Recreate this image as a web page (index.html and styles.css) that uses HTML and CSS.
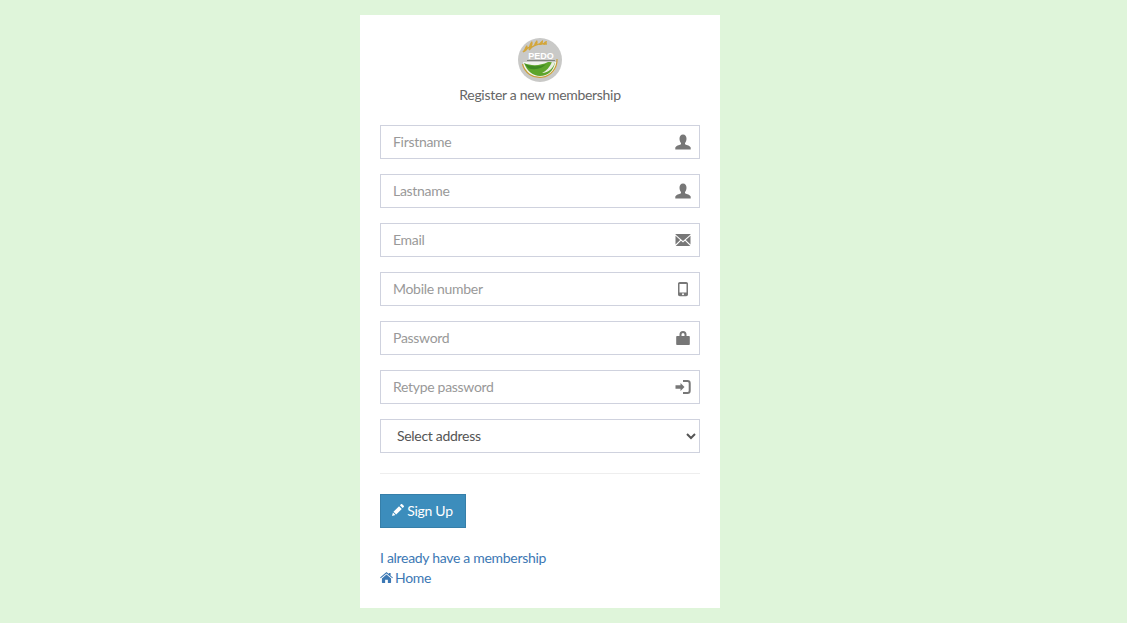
FILE: index.html
```html
<!DOCTYPE html>
<html lang="en">
<head>
    <meta charset="UTF-8">
    <meta name="viewport" content="width=device-width, initial-scale=1.0">
    <title>Registration</title>
    <link rel="stylesheet" href="styles.css">
</head>
<body>
    <div class="register-box">
        <div class="logo">
            <svg viewBox="0 0 44 44" width="44" height="44">
                <circle cx="22" cy="22" r="22" fill="#c9c9c7"/>
                <path d="M5 24h34c0 9-7 15-17 15S5 33 5 24z" fill="#f2f3ee"/>
                <path d="M6 25c7 3 16 3 24-1 2 0 5 0 7 1-2 8-7 13-15 13-7 0-13-5-16-13z" fill="#5da52c"/>
                <path d="M7 26c7 3 14 3 21 0-3 4-11 7-18 4z" fill="#3f8a22"/>
                <path d="M24 35c4-2 8-6 10-11l3 .5c-2 6-6 10-13 10.500z" fill="#e8eee0"/>
                <path d="M4.500 26a17.500 17.500 0 0 0 34.500-5" fill="none" stroke="#c99f3a" stroke-width="1.200"/>
                <path d="M5 14c3-3 6-5 9-6M11 12c3-4 9-7 18-6" fill="none" stroke="#cfa63e" stroke-width="1.600"/>
                <path d="M6 14c0-3 1-5 3-7 1 2 1 4-1 6zM11 10c0-3 1-5 3-7 1 2 1 4-1 6zM16 8c0-2 1-4 3-6 1 2 1 4-1 5zM21 7c0-2 2-4 4-5 0 2 0 4-2 5zM25 6c1-2 2-3 4-3 0 2-1 3-3 4z" fill="#d4a63a"/>
                <rect x="9" y="22" width="28" height="1" fill="#7f857a"/>
                <text x="23" y="21" class="logo-text">PEDO</text>
            </svg>
        </div>
        <p class="box-msg">Register a new membership</p>

        <form class="register-form">
            <div class="input-group">
                <input type="text" placeholder="Firstname">
                <svg class="input-icon" viewBox="0 0 16 16"><path d="M8 .5c2.200 0 3.500 1.700 3.500 4.200 0 1.800-.7 3.300-1.500 4.200v1.300c2 .9 5.200 1.600 5.700 3.300V15.500H.3v-2c.5-1.700 3.700-2.400 5.700-3.300V8.900c-.8-.9-1.500-2.400-1.500-4.200C4.500 2.200 5.800.5 8 .5z"/></svg>
            </div>
            <div class="input-group">
                <input type="text" placeholder="Lastname">
                <svg class="input-icon" viewBox="0 0 16 16"><path d="M8 .5c2.200 0 3.500 1.700 3.500 4.200 0 1.800-.7 3.300-1.500 4.200v1.300c2 .9 5.200 1.600 5.700 3.300V15.500H.3v-2c.5-1.700 3.700-2.400 5.700-3.300V8.900c-.8-.9-1.500-2.400-1.500-4.200C4.500 2.200 5.800.5 8 .5z"/></svg>
            </div>
            <div class="input-group">
                <input type="email" placeholder="Email">
                <svg class="input-icon" viewBox="0 0 16 16"><path d="M.5 2h15v.5L8 9 .5 2.500zM.5 3.700 5.200 8 .5 12.600zM15.500 3.700 10.800 8l4.700 4.600zM6 8.700 8 10.500l2-1.800 5.300 5.300H.7z"/></svg>
            </div>
            <div class="input-group">
                <input type="text" placeholder="Mobile number">
                <svg class="input-icon" viewBox="0 0 16 16"><path fill-rule="evenodd" d="M4.800 1h6.400c1 0 1.800.8 1.800 1.700v10.800c0 1-.8 1.700-1.800 1.700H4.800c-1 0-1.800-.7-1.800-1.700V2.700C3 1.800 3.800 1 4.800 1zM4.500 3v8.500h7V3zM8 12.300a1 1 0 1 0 0 2 1 1 0 0 0 0-2z"/></svg>
            </div>
            <div class="input-group">
                <input type="password" placeholder="Password">
                <svg class="input-icon" viewBox="0 0 16 16"><path fill-rule="evenodd" d="M4.500 6V4.500a3.500 3.500 0 0 1 7 0V6H14c.5 0 .8.300.8.800v7.500c0 .4-.3.700-.8.700H2c-.5 0-.8-.3-.8-.7V6.800c0-.5.300-.8.800-.8zM6.500 6h3V4.500a1.500 1.500 0 0 0-3 0z"/></svg>
            </div>
            <div class="input-group">
                <input type="password" placeholder="Retype password">
                <svg class="input-icon" viewBox="0 0 16 16"><path d="M5.500 4 9.500 8l-4 4V9.800H.5V6.200h5z"/><path d="M8 2h4.500c1.300 0 2.200.9 2.200 2.200v7.600c0 1.300-.9 2.200-2.200 2.200H8" fill="none" stroke-width="2" class="icon-stroke"/></svg>
            </div>
            <div class="input-group">
                <select>
                    <option>Select address</option>
                </select>
            </div>

            <hr class="divider">

            <button type="button" class="btn-signup">
                <svg class="btn-icon" viewBox="0 0 14 14"><path d="M10.500.3c.4-.4 1-.4 1.400 0l1.800 1.800c.4.4.4 1 0 1.400l-1.300 1.300-3.200-3.200zM8.200 2.600 1.700 9.100l3.200 3.200 6.500-6.500zM1.100 10 0 14l4-1.100z"/></svg>
                Sign Up
            </button>
        </form>

        <div class="links">
            <a href="#">I already have a membership</a>
            <a href="#"><svg class="home-icon" viewBox="0 0 14 12"><path d="M7 0 9.500 2.200V1h2v3l2.500 2.100-.7.800L7 1.700.7 6.900 0 6.100z"/><path d="M7 2.800 2 7v4.500c0 .3.200.5.500.5h3V8.500h3V12h3c.3 0 .5-.2.500-.5V7z"/></svg>Home</a>
        </div>
    </div>
</body>
</html>
```

FILE: styles.css
```css
/* General styles */
html, body {
    height: 100%;
}

body {
    margin: 0;
    background-color: #dff5da;
    font-family: Lato, "Open Sans", sans-serif;
    font-size: 14px;
    line-height: 20px;
    letter-spacing: -0.3px;
    color: #666;
}

.register-box {
    box-sizing: border-box;
    width: 360px;
    margin: 15px 0 0 360px;
    padding: 23px 20px 20px;
    background: #fff;
}

.logo {
    display: flex;
    justify-content: center;
}

.logo-text {
    font-family: "Liberation Sans", sans-serif;
    font-size: 9px;
    font-weight: bold;
    letter-spacing: 0;
    fill: #fff;
    text-anchor: middle;
}

.box-msg {
    margin: 3px 0 20px;
    text-align: center;
}

.input-group {
    position: relative;
    margin-bottom: 15px;
}

input, select {
    display: block;
    box-sizing: border-box;
    width: 100%;
    height: 34px;
    border: 1px solid #cfd2de;
    border-radius: 0;
    background: #fff;
    font-family: inherit;
    font-size: 14px;
    letter-spacing: inherit;
    color: #555;
}

input {
    padding: 5px 34px 7px 12px;
}

input::placeholder {
    color: #999;
}

select {
    padding: 5px 12px 7px;
}

.input-icon {
    position: absolute;
    top: 9px;
    right: 9px;
    width: 16px;
    height: 16px;
    fill: #777;
}

.icon-stroke {
    stroke: #777;
}

.divider {
    margin: 20px 0;
    border: 0;
    border-top: 1px solid #eee;
}

.btn-signup {
    display: flex;
    align-items: center;
    justify-content: center;
    gap: 3px;
    box-sizing: border-box;
    height: 34px;
    width: 86px;
    padding: 0 1px 2px 0;
    border: 1px solid #367fa9;
    background-color: #3c8dbc;
    color: #fff;
    font-family: inherit;
    font-size: 14px;
    letter-spacing: inherit;
    cursor: pointer;
}

.btn-icon {
    width: 12px;
    height: 12px;
    fill: #fff;
}

.links {
    margin-top: 20px;
}

.links a {
    display: block;
    color: #3c78b4;
    text-decoration: none;
}

.home-icon {
    width: 13px;
    height: 11px;
    margin-right: 2px;
    fill: #3c78b4;
}
```
